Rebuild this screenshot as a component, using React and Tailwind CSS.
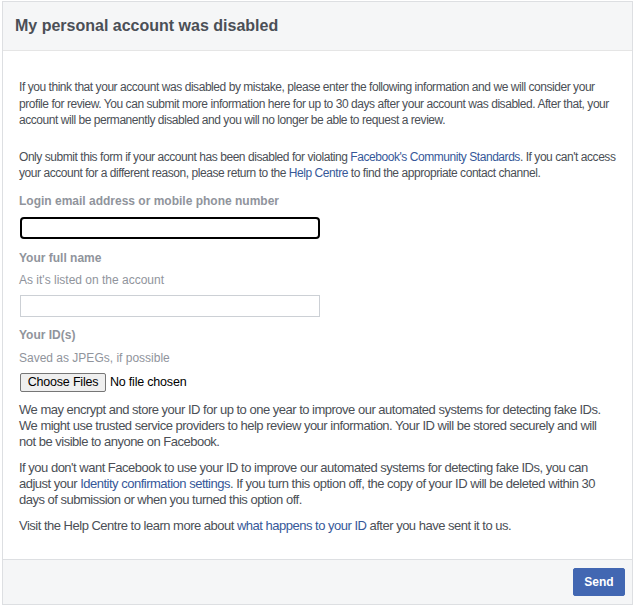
export default function App() {
  return (
    <div className="min-h-screen bg-white pt-[1px] pl-[2px] font-['Liberation_Sans',Arial,sans-serif]">
      <div className="w-[631px] h-[604px] border border-[#dddfe2] flex flex-col">
        {/* header */}
        <div className="h-[49px] bg-[#f5f6f7] border-b border-[#e5e5e5] flex items-center px-3">
          <h1 className="text-[16px] font-bold text-[#4b4f56]">My personal account was disabled</h1>
        </div>

        {/* body */}
        <div className="flex-1 px-4 pt-[28px] text-[12px] leading-[16.5px] text-[#4b4f56]">
          <p className="tracking-[-0.45px]">
            If you think that your account was disabled by mistake, please enter the following information and we will
            consider your profile for review. You can submit more information here for up to 30 days after your account was
            disabled. After that, your account will be permanently disabled and you will no longer be able to request a
            review.
          </p>
          <p className="mt-[20px] tracking-[-0.45px]">
            Only submit this form if your account has been disabled for violating{' '}
            <a className="text-[#365899]">Facebook's Community Standards</a>. If you can't access your account for a
            different reason, please return to the <a className="text-[#365899]">Help Centre</a> to find the appropriate
            contact channel.
          </p>

          <div className="mt-[11px] font-bold text-[#90949c]">Login email address or mobile phone number</div>
          <input
            type="text"
            className="mt-[8px] block w-[300px] h-[22px] ml-[1px] border-2 border-black rounded-[4px] outline-none px-1"
          />

          <div className="mt-[11px] font-bold text-[#90949c]">Your full name</div>
          <div className="mt-[5px] text-[#90949c]">As it's listed on the account</div>
          <input
            type="text"
            className="mt-[7px] block w-[300px] h-[22px] ml-[1px] border border-[#ccd0d5] outline-none px-1"
          />

          <div className="mt-[10px] font-bold text-[#90949c]">Your ID(s)</div>
          <div className="mt-[6px] text-[#90949c]">Saved as JPEGs, if possible</div>
          <div className="mt-[7px] flex items-center text-[12.5px] text-black">
            <button className="ml-[1px] h-[19px] w-[86px] border border-[#767676] rounded-[2px] bg-[#efefef] text-[12.5px] leading-none tracking-[-0.2px]">
              Choose Files
            </button>
            <span className="ml-[4px] tracking-[-0.2px]">No file chosen</span>
          </div>

          <div className="text-[13px] leading-[16px] tracking-[-0.5px]">
            <p className="mt-[10px]">
              We may encrypt and store your ID for up to one year to improve our automated systems for detecting fake IDs.
              We might use trusted service providers to help review your information. Your ID will be stored securely and
              will not be visible to anyone on Facebook.
            </p>
            <p className="mt-[10px]">
              If you don't want Facebook to use your ID to improve our automated systems for detecting fake IDs, you can
              adjust your <a className="text-[#365899]">Identity confirmation settings</a>. If you turn this option off, the
              copy of your ID will be deleted within 30 days of submission or when you turned this option off.
            </p>
            <p className="mt-[10px]">
              Visit the Help Centre to learn more about{' '}
              <a className="text-[#365899]">what happens to your ID</a> after you have sent it to us.
            </p>
          </div>
        </div>

        {/* footer */}
        <div className="h-[45px] bg-[#f5f6f7] border-t border-[#dddfe2] flex items-center justify-end pr-[7px]">
          <button className="h-[28px] w-[52px] flex items-center justify-center bg-[#4267b2] border border-[#4267b2] rounded-[2px] text-white text-[12px] font-bold">
            Send
          </button>
        </div>
      </div>
    </div>
  );
}
